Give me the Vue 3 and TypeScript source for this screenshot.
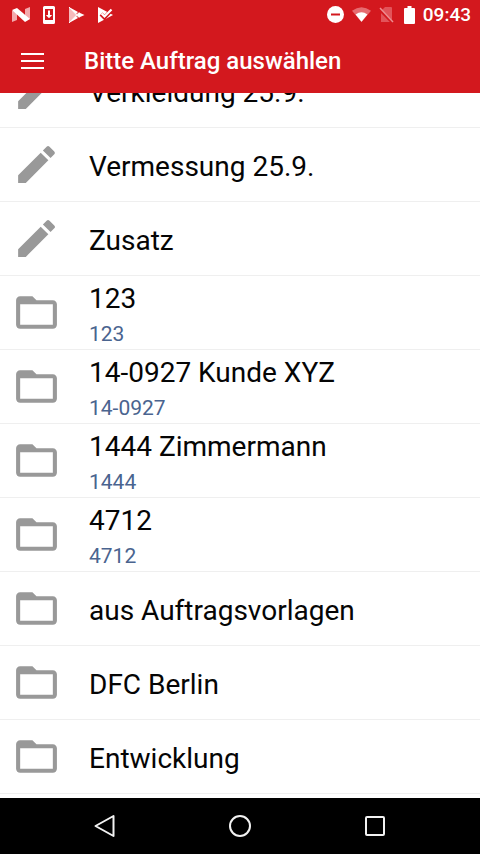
<script setup lang="ts">
interface Entry {
  title: string
  code?: string
  kind: 'task' | 'folder'
}

const entries: Entry[] = [
  { title: 'Verkleidung 25.9.', kind: 'task' },
  { title: 'Vermessung 25.9.', kind: 'task' },
  { title: 'Zusatz', kind: 'task' },
  { title: '123', code: '123', kind: 'folder' },
  { title: '14-0927 Kunde XYZ', code: '14-0927', kind: 'folder' },
  { title: '1444 Zimmermann', code: '1444', kind: 'folder' },
  { title: '4712', code: '4712', kind: 'folder' },
  { title: 'aus Auftragsvorlagen', kind: 'folder' },
  { title: 'DFC Berlin', kind: 'folder' },
  { title: 'Entwicklung', kind: 'folder' },
]

const iconPaths: Record<Entry['kind'], string> = {
  task: 'M3 17.25V21h3.75L17.81 9.94l-3.75-3.75L3 17.25zM20.71 7.04a1 1 0 0 0 0-1.41l-2.34-2.34a1 1 0 0 0-1.41 0l-1.83 1.83 3.75 3.75 1.83-1.83z',
  folder: 'M20 6h-8l-2-2H4c-1.1 0-2 .9-2 2v12c0 1.1.9 2 2 2h16c1.1 0 2-.9 2-2V8c0-1.1-.9-2-2-2zm0 12H4V8h16v10z',
}
</script>

<template>
  <div class="screen">
    <div class="status">
      <div class="status-group notifications">
        <svg width="18" height="18" viewBox="0 0 18 18" aria-hidden="true">
          <path d="M0 5l5-2v11l-5 2zM13 3l5-2v12l-5 2z" fill="#f3a9ac" />
          <path d="M0 4l5-2 13 11-5 3z" fill="#fff" />
        </svg>
        <svg width="14" height="18" viewBox="0 0 14 18" aria-hidden="true">
          <path fill-rule="evenodd" d="M2.500 0h9A1.500 1.500 0 0 1 13 1.500v15a1.500 1.500 0 0 1-1.500 1.500h-9A1.500 1.500 0 0 1 1 16.500v-15A1.500 1.500 0 0 1 2.500 0zM3 3v11h8V3z" fill="#fff" />
          <path d="M6 4.500h2V9h2.200L7 12.300 3.800 9H6z" fill="#fff" />
        </svg>
        <svg width="17" height="18" viewBox="0 0 17 18" aria-hidden="true">
          <path d="M1 1l9 8-9 8z" fill="#f6babc" />
          <path d="M1 1l9 5-2 2zM1 17l9-5-2-2zM11 6.500L16.500 9 11 11.500 8.800 9z" fill="#fff" />
          <path d="M1 1l10 10.500M1 17L11 6.500" fill="none" stroke="#fff" stroke-width="1" />
        </svg>
        <svg width="17" height="18" viewBox="0 0 17 18" aria-hidden="true">
          <path d="M1 1l15 8L1 17z" fill="#fff" />
          <path d="M4 8l3.500 3.500L14.500 4" fill="none" stroke="#d3181e" stroke-width="4" />
          <path d="M4.500 7.500l3 3L14.500 3.500" fill="none" stroke="#fff" stroke-width="2.200" />
        </svg>
      </div>
      <div class="status-group system">
        <svg width="17" height="17" viewBox="0 0 17 17" aria-hidden="true">
          <circle cx="8.500" cy="8.500" r="8.500" fill="#fff" />
          <path d="M4 8.500h9" stroke="#d3181e" stroke-width="2" />
        </svg>
        <svg width="19" height="17" viewBox="0 0 20 17" aria-hidden="true">
          <path d="M0 4.500Q10-3 20 4.500L10 16.500z" fill="#e66b70" />
          <path d="M3.800 8.500Q10 3.500 16.200 8.500L10 16z" fill="#fff" />
        </svg>
        <svg width="15" height="17" viewBox="0 0 15 17" aria-hidden="true">
          <path d="M2 5L6 1h6a1 1 0 0 1 1 1v14H2z" fill="#e2545a" />
          <path d="M0 3l14 14" stroke="#d3181e" stroke-width="3" />
          <path d="M1 2l13 14" stroke="#ed8e92" stroke-width="1.500" />
        </svg>
        <svg class="battery" width="11" height="18" viewBox="0 0 11 18" aria-hidden="true">
          <path d="M3.500 0h4v2H10a1 1 0 0 1 1 1v14a1 1 0 0 1-1 1H1a1 1 0 0 1-1-1V3a1 1 0 0 1 1-1h2.500z" fill="#fff" />
        </svg>
        <time>09:43</time>
      </div>
    </div>

    <header class="toolbar">
      <button class="menu" type="button" aria-label="Menü">
        <svg width="24" height="18" viewBox="0 0 24 18" aria-hidden="true">
          <path d="M1 2h23M1 9h23M1 16h23" stroke="#fff" stroke-width="2" />
        </svg>
      </button>
      <h1>Bitte Auftrag auswählen</h1>
    </header>

    <main class="content">
      <ul class="list">
        <li v-for="entry in entries" :key="entry.title">
          <button class="row" type="button">
            <svg class="icon" viewBox="0 0 24 24" aria-hidden="true">
              <path :d="iconPaths[entry.kind]" />
            </svg>
            <span class="labels">
              <span class="title">{{ entry.title }}</span>
              <span v-if="entry.code" class="code">{{ entry.code }}</span>
            </span>
          </button>
        </li>
      </ul>
    </main>

    <nav class="navbar">
      <button type="button" aria-label="Zurück">
        <svg width="24" height="24" viewBox="0 0 24 24" aria-hidden="true">
          <path d="M20.500 2v20L2.500 12z" />
        </svg>
      </button>
      <button type="button" aria-label="Startseite">
        <svg width="24" height="24" viewBox="0 0 24 24" aria-hidden="true">
          <circle cx="12" cy="12" r="10" />
        </svg>
      </button>
      <button type="button" aria-label="Übersicht">
        <svg width="24" height="24" viewBox="0 0 24 24" aria-hidden="true">
          <rect x="3" y="3" width="18" height="18" rx="1" />
        </svg>
      </button>
    </nav>
  </div>
</template>

<style>
body {
  margin: 0;
}
</style>

<style scoped>
.screen {
  display: flex;
  flex-direction: column;
  height: 100vh;
  background: #fff;
  color: #050505;
  font-family: Roboto, "Liberation Sans", sans-serif;
}

button {
  margin: 0;
  padding: 0;
  border: 0;
  background: none;
  color: inherit;
  font: inherit;
  cursor: pointer;
}

svg {
  display: block;
  flex: none;
}

.status {
  display: flex;
  flex: none;
  align-items: center;
  justify-content: space-between;
  height: 29px;
  padding: 0 9px 0 12px;
  background: #d3181e;
  color: #fff;
}

.status-group {
  display: flex;
  align-items: center;
}

.notifications {
  gap: 12px;
}

.system {
  gap: 8px;
}

.battery {
  margin-left: 2px;
}

time {
  font-size: 19px;
  font-weight: 500;
  line-height: 28px;
}

.toolbar {
  display: flex;
  flex: none;
  align-items: center;
  height: 64px;
  padding-left: 20px;
  gap: 40px;
  background: #d3181e;
  color: #fff;
}

h1 {
  margin: 0;
  font-size: 24px;
  font-weight: 500;
  line-height: 32px;
}

.content {
  display: flex;
  flex: 1;
  flex-direction: column;
  justify-content: flex-end;
  min-height: 0;
  overflow: hidden;
}

.list {
  flex: none;
  margin: 0;
  padding: 0 0 4px;
  list-style: none;
}

.list li {
  border-bottom: 1px solid #efefef;
}

.row {
  display: flex;
  align-items: center;
  gap: 28px;
  width: 100%;
  height: 73px;
  padding: 0 12px;
  text-align: left;
}

.icon {
  width: 49px;
  height: 49px;
  fill: #999;
}

.labels {
  display: flex;
  flex-direction: column;
  padding-top: 4px;
}

.title {
  font-size: 28px;
  line-height: 38px;
}

.code {
  color: #4a648f;
  font-size: 21px;
  line-height: 32px;
}

.navbar {
  display: flex;
  flex: none;
  align-items: center;
  justify-content: center;
  gap: 87px;
  height: 56px;
  background: #000;
}

.navbar button {
  padding: 12px;
}

.navbar svg {
  fill: none;
  stroke: #f2f2f2;
  stroke-width: 2;
  stroke-linejoin: round;
}
</style>
